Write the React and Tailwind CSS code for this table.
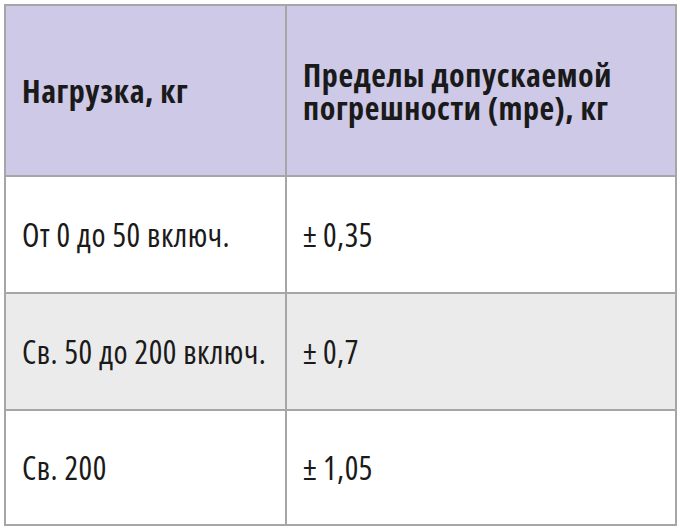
const ROWS = [
  { load: 'От 0 до 50 включ.', mpe: '0,35', shade: false },
  { load: 'Св. 50 до 200 включ.', mpe: '0,7', shade: true },
  { load: 'Св. 200', mpe: '1,05', shade: false },
]

const font = { fontFamily: '"Open Sans", "DejaVu Sans Condensed", sans-serif' }

export default function App() {
  return (
    <div className="bg-white w-[680px] h-[529px] pt-[4px] pl-[4px]" style={font}>
      <table className="border-collapse w-[673px] text-[#1a1a1a] text-[32px] leading-[32px] font-stretch-condensed">
        <colgroup>
          <col className="w-[281px]" />
          <col />
        </colgroup>
        <thead>
          <tr className="h-[171px] bg-[#cdc9e6]">
            <th className="border-2 border-[#a6a6a6] text-left font-bold tracking-[0.6px] px-[16px] align-middle">Нагрузка, кг</th>
            <th className="border-2 border-[#a6a6a6] text-left font-bold tracking-[0.6px] leading-[33px] px-[16px] align-middle">
              Пределы допускаемой
              <br />
              погрешности (mpe), кг
            </th>
          </tr>
        </thead>
        <tbody>
          {ROWS.map((r, i) => (
            <tr key={i} className={`${i === 2 ? 'h-[115px]' : 'h-[117px]'} ${r.shade ? 'bg-[#ebebeb]' : 'bg-white'}`}>
              <td className="border-2 border-[#a6a6a6] px-[16px] align-middle font-normal tracking-[0.5px] whitespace-nowrap">{r.load}</td>
              <td className="border-2 border-[#a6a6a6] px-[16px] align-middle font-normal tracking-[0.5px]">
                ±{'\u2009'}{r.mpe}
              </td>
            </tr>
          ))}
        </tbody>
      </table>
    </div>
  )
}
